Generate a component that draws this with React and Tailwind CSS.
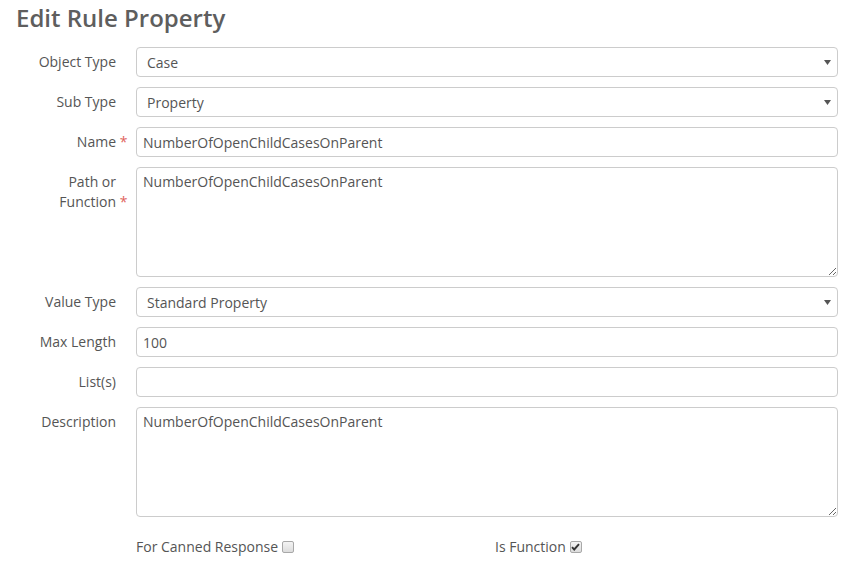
import React from 'react';

const FONT = { fontFamily: '"Open Sans", "Liberation Sans", sans-serif' };

function Label({ children, required }) {
  return (
    <label className="w-[136px] shrink-0 pl-[15px] pr-[20px] pt-[5px] text-right text-[14px] leading-5 text-[#555]">
      {children}
      {required && (
        <span className="inline-block w-0 overflow-visible whitespace-nowrap text-left text-[#e0635e]">&nbsp;*</span>
      )}
    </label>
  );
}

function Select({ value }) {
  return (
    <div className="relative w-[702px]">
      <select
        defaultValue={value}
        className="h-[30px] w-full appearance-none rounded-[4px] border border-[#ccc] bg-white pl-[10px] pr-6 text-[14px] text-[#555] outline-none"
      >
        <option>{value}</option>
      </select>
      <svg className="pointer-events-none absolute right-[7px] top-[13px]" width="7" height="5" viewBox="0 0 7 5">
        <path d="M0 0h7L3.5 5z" fill="#555" />
      </svg>
    </div>
  );
}

function Input({ value }) {
  return (
    <input
      defaultValue={value}
      className="h-[30px] w-[702px] rounded-[4px] border border-[#ccc] bg-white px-[6px] text-[14px] text-[#555] outline-none"
    />
  );
}

function TextArea({ value }) {
  return (
    <textarea
      defaultValue={value}
      className="h-[110px] w-[702px] rounded-[4px] border border-[#ccc] bg-white px-[6px] py-[4px] text-[14px] leading-5 text-[#555] outline-none"
    />
  );
}

function Row({ label, required, children }) {
  return (
    <div className="mb-[10px] flex items-start">
      <Label required={required}>{label}</Label>
      {children}
    </div>
  );
}

function Check({ checked }) {
  return (
    <span className="ml-[4px] inline-flex h-[12px] w-[12px] items-center justify-center rounded-[2px] border border-[#a8a8a8] bg-gradient-to-b from-[#f4f4f4] to-[#dcdcdc]">
      {checked && (
        <svg width="9" height="8" viewBox="0 0 9 8">
          <path d="M1 4.2l2.2 2.3L8 1.2" fill="none" stroke="#333" strokeWidth="1.9" />
        </svg>
      )}
    </span>
  );
}

export default function App() {
  return (
    <div className="min-h-screen bg-white" style={FONT}>
      <h1 className="pl-[16px] pt-[5px] text-[24px] font-semibold leading-[26px] text-[#5e5e5e]">Edit Rule Property</h1>

      <form className="mt-[16px]">
        <Row label="Object Type"><Select value="Case" /></Row>
        <Row label="Sub Type"><Select value="Property" /></Row>
        <Row label="Name" required><Input value="NumberOfOpenChildCasesOnParent" /></Row>
        <Row label="Path or Function" required><TextArea value="NumberOfOpenChildCasesOnParent" /></Row>
        <Row label="Value Type"><Select value="Standard Property" /></Row>
        <Row label="Max Length"><Input value="100" /></Row>
        <Row label="List(s)"><Input value="" /></Row>
        <Row label="Description"><TextArea value="NumberOfOpenChildCasesOnParent" /></Row>

        <div className="mt-[20px] flex pl-[136px] text-[14px] leading-5 text-[#555]">
          <div className="flex w-[359px] items-center">
            For Canned Response <Check />
          </div>
          <div className="flex items-center">
            Is Function <Check checked />
          </div>
        </div>
      </form>
    </div>
  );
}
